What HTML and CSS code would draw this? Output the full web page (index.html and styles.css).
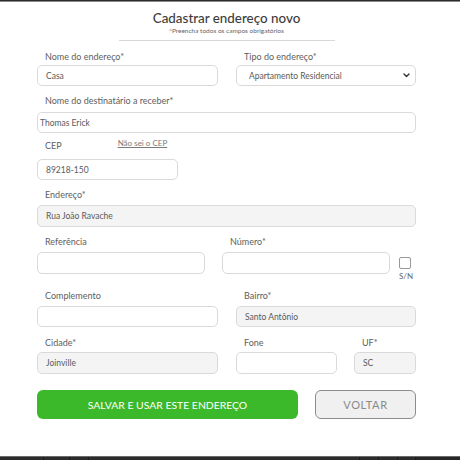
FILE: index.html
```html
<!DOCTYPE html>
<html lang="pt-BR">
<head>
<meta charset="utf-8">
<title>Cadastrar endereço novo</title>
<link rel="stylesheet" href="styles.css">
</head>
<body>
<div class="topbar"></div>
<main class="page">
  <form class="form">
    <header class="head">
      <h1 class="title">Cadastrar endereço novo</h1>
      <p class="subtitle">*Preencha todos os campos obrigatórios</p>
      <div class="divider"></div>
    </header>

    <div class="row r1">
      <div class="field w181">
        <label class="lbl mb2">Nome do endereço*</label>
        <div class="input h21">Casa</div>
      </div>
      <div class="field w180">
        <label class="lbl mb2">Tipo do endereço*</label>
        <div class="input select h21">
          <span>Apartamento Residencial</span>
          <svg class="chev" width="7" height="5" viewBox="0 0 7 5"><path d="M1 1 L3.5 3.5 L6 1" fill="none" stroke="#333" stroke-width="1.4" stroke-linecap="round" stroke-linejoin="round"/></svg>
        </div>
      </div>
    </div>

    <div class="row r2">
      <div class="field wfull">
        <label class="lbl mb5">Nome do destinatário a receber*</label>
        <div class="input h21 tight">Thomas Erick</div>
      </div>
    </div>

    <div class="row r3">
      <div class="field w141">
        <div class="lblrow mb7">
          <label class="lbl">CEP</label>
          <a class="cep-link">Não sei o CEP</a>
        </div>
        <div class="input h21">89218-150</div>
      </div>
    </div>

    <div class="row r4">
      <div class="field wfull">
        <label class="lbl mb4">Endereço*</label>
        <div class="input h22 disabled">Rua João Ravache</div>
      </div>
    </div>

    <div class="row r5">
      <div class="field w168">
        <label class="lbl mb4">Referência</label>
        <div class="input h22"></div>
      </div>
      <div class="field w168">
        <label class="lbl mb4">Número*</label>
        <div class="input h22"></div>
      </div>
      <div class="sn">
        <span class="check"></span>
        <span class="sn-text">S/N</span>
      </div>
    </div>

    <div class="row r6">
      <div class="field w181">
        <label class="lbl mb4">Complemento</label>
        <div class="input h21"></div>
      </div>
      <div class="field w180">
        <label class="lbl mb4">Bairro*</label>
        <div class="input h21 disabled">Santo Antônio</div>
      </div>
    </div>

    <div class="row r7">
      <div class="field w181">
        <label class="lbl mb3">Cidade*</label>
        <div class="input h22 disabled">Joinville</div>
      </div>
      <div class="field w101">
        <label class="lbl mb3">Fone</label>
        <div class="input h22"></div>
      </div>
      <div class="field w62">
        <label class="lbl mb3">UF*</label>
        <div class="input h22 disabled">SC</div>
      </div>
    </div>

    <div class="row actions">
      <button type="button" class="btn btn-save">SALVAR E USAR ESTE ENDEREÇO</button>
      <button type="button" class="btn btn-back">VOLTAR</button>
    </div>
  </form>
</main>
<footer class="bottombar">
  <span class="seg s1"></span>
  <span class="seg s2"></span>
  <span class="seg s3"></span>
  <span class="seg s4"></span>
  <span class="seg s5"></span>
  <span class="seg s6"></span>
  <span class="seg s7"></span>
  <span class="seg s8"></span>
</footer>
</body>
</html>
```

FILE: styles.css
```css
* { box-sizing: border-box; }
html, body { margin: 0; padding: 0; }
body {
  width: 460px;
  height: 460px;
  display: flex;
  flex-direction: column;
  background: #fff;
  font-family: Lato, "Noto Sans", sans-serif;
  color: #555;
  overflow: hidden;
}
.topbar {
  height: 2px;
  background: #2b2b2b;
  border-bottom: 1px solid #8a8a8a;
  flex: none;
}
.page { flex: 1; }
.form {
  margin-left: 37px;
  width: 379px;
  display: flex;
  flex-direction: column;
}
.head {
  display: flex;
  flex-direction: column;
  align-items: center;
  padding-top: 7px;
}
.title {
  margin: 0;
  font-size: 13.4px;
  line-height: 18px;
  font-weight: 500;
  color: #3d3d3d;
}
.subtitle {
  margin: 0;
  font-size: 6.5px;
  line-height: 8px;
  color: #666;
}
.divider {
  margin-top: 5px;
  width: 216px;
  height: 1px;
  background: #d8d8d8;
}
.row { display: flex; }
.r1 { margin-top: 10px; gap: 18px; }
.r2 { margin-top: 9px; }
.r3 { margin-top: 7px; }
.r4 { margin-top: 9px; }
.r5 { margin-top: 9px; gap: 17px; }
.r6 { margin-top: 9px; gap: 18px; }
.r7 { margin-top: 10px; gap: 18px; }
.r7 .w101 { margin-right: -1px; }
.actions { margin-top: 16px; gap: 17px; }

.field { display: flex; flex-direction: column; }
.w181 { width: 181px; }
.w180 { width: 180px; }
.w168 { width: 168px; }
.w141 { width: 141px; }
.w101 { width: 101px; }
.w62 { width: 62px; }
.wfull { width: 379px; }

.lbl {
  display: block;
  height: 12px;
  line-height: 12px;
  padding-left: 8px;
  font-size: 9px;
  color: #5e5e5e;
}
.mb2 { margin-bottom: 2px; }
.mb3 { margin-bottom: 3px; }
.mb4 { margin-bottom: 4px; }
.mb5 { margin-bottom: 5px; }
.mb7 { margin-bottom: 7px; }

.lblrow { display: flex; align-items: flex-start; height: 12px; }
.cep-link {
  margin-left: 56px;
  margin-top: -3px;
  font-size: 8px;
  line-height: 12px;
  color: #7a7a7a;
  text-decoration: underline;
}

.input {
  display: flex;
  align-items: center;
  border: 1px solid #dadada;
  border-radius: 5px;
  background: #fff;
  padding-left: 8px;
  font-size: 8.5px;
  color: #5a5a5a;
}
.h21 { height: 21px; }
.h22 { height: 22px; }
.tight { padding-left: 2px; }
.disabled { background: #f4f4f4; }
.select {
  justify-content: space-between;
  padding-left: 12px;
  padding-right: 5px;
}
.chev { flex: none; }

.sn {
  margin-left: -8px;
  padding-top: 21px;
  display: flex;
  flex-direction: column;
  align-items: flex-start;
  width: 14px;
  margin-right: -6px;
}
.check {
  width: 12px;
  height: 12px;
  border: 1px solid #999;
  border-radius: 2px;
  background: #fff;
}
.sn-text {
  margin-top: 2px;
  font-size: 8px;
  line-height: 10px;
  color: #666;
  white-space: nowrap;
}

.btn {
  height: 29px;
  border-radius: 6px;
  font-family: Lato, "Noto Sans", sans-serif;
  font-size: 10.4px;
  padding: 0;
  cursor: pointer;
}
.btn-save {
  width: 261px;
  background: #3cb92a;
  border: none;
  color: #fff;
}
.btn-back {
  width: 101px;
  background: #f0f0f0;
  border: 1px solid #8c8c8c;
  color: #8a8a8a;
  font-size: 11px;
  letter-spacing: 0.6px;
}

.bottombar {
  flex: none;
  height: 4px;
  display: flex;
  background: #2c2c2c;
  border-top: 1px solid #6a6a6a;
}
.seg { height: 100%; border-left: 1px solid #1a1a1a; }
.s1 { width: 43px; border-left: none; }
.s2 { width: 26px; }
.s3 { width: 19px; }
.s4 { width: 271px; }
.s5 { width: 19px; }
.s6 { width: 19px; }
.s7 { width: 18px; }
.s8 { flex: 1; background: #262626; }
```
